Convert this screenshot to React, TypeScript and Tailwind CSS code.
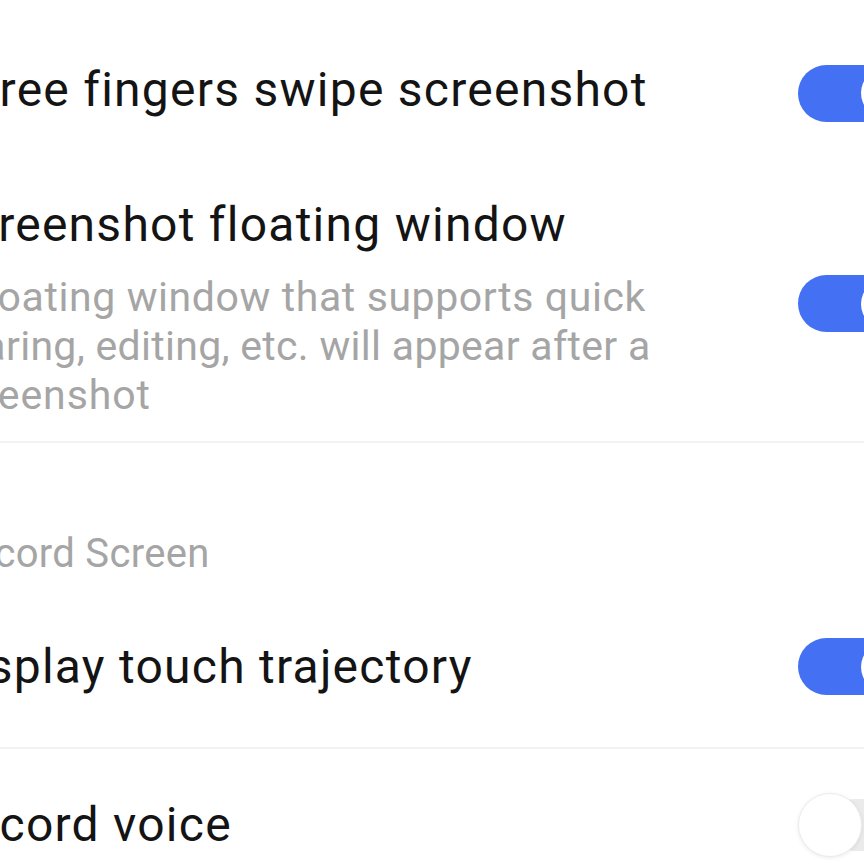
const font = { fontFamily: "Roboto, 'Noto Sans', sans-serif" };

function ToggleOn() {
	return (
		<div className="shrink-0 mr-[-50px] w-[116px] h-[57px] rounded-full bg-[#4470f4] flex items-center justify-end pr-[5px]">
			<div className="size-[48px] rounded-full bg-white" />
		</div>
	);
}

function ToggleOff() {
	return (
		<div className="relative shrink-0 mr-[-50px] w-[116px] h-[64px]">
			<div className="absolute left-[30px] right-0 top-[6px] bottom-[6px] rounded-full bg-[#ebebeb]" />
			<div className="absolute left-0 top-0 size-[64px] rounded-full bg-white border border-[#ececec] shadow-[0_1px_4px_rgba(0,0,0,0.08)]" />
		</div>
	);
}

function Divider() {
	return <div className="h-[2px] bg-[#f2f2f2] mr-[-80px]" />;
}

const title = "ml-[-6px] text-[48px] leading-[56px] tracking-[1.25px] text-[#141414]";

export default function App() {
	return (
		<div className="w-[864px] h-[864px] overflow-hidden bg-white" style={font}>
			<div className="ml-[-52px] w-[916px]">
				{/* three fingers */}
				<div className="h-[180px] flex items-center">
					<div className={`flex-1 ${title}`}>Three fingers swipe screenshot</div>
					<div className="mt-[6px]">
						<ToggleOn />
					</div>
				</div>

				{/* floating window */}
				<div className="flex items-center pt-[17px] pb-[21px]">
					<div className="flex-1">
						<div className={title}>Screenshot floating window</div>
						<div className="mt-[20px] ml-[-14px] text-[41px] leading-[49px] tracking-[0.6px] text-[#a5a5a5]">
							<div>A floating window that supports quick</div>
							<div className="ml-[5px] tracking-[0.3px]">sharing, editing, etc. will appear after a</div>
							<div className="ml-[5px] tracking-[0.9px]">screenshot</div>
						</div>
					</div>
					<div className="mb-[10px]">
						<ToggleOn />
					</div>
				</div>
				<Divider />

				{/* section header */}
				<div className="pt-[87px] text-[40px] leading-[48px] tracking-[0.3px] text-[#a5a5a5]">
					Record Screen
				</div>

				<div className="h-[169px] pt-[8px] flex items-center">
					<div className={`flex-1 ${title}`}>Display touch trajectory</div>
					<ToggleOn />
				</div>
				<Divider />

				<div className="h-[152px] flex items-center">
					<div className={`flex-1 ${title}`}>Record voice</div>
					<ToggleOff />
				</div>
			</div>
		</div>
	);
}
